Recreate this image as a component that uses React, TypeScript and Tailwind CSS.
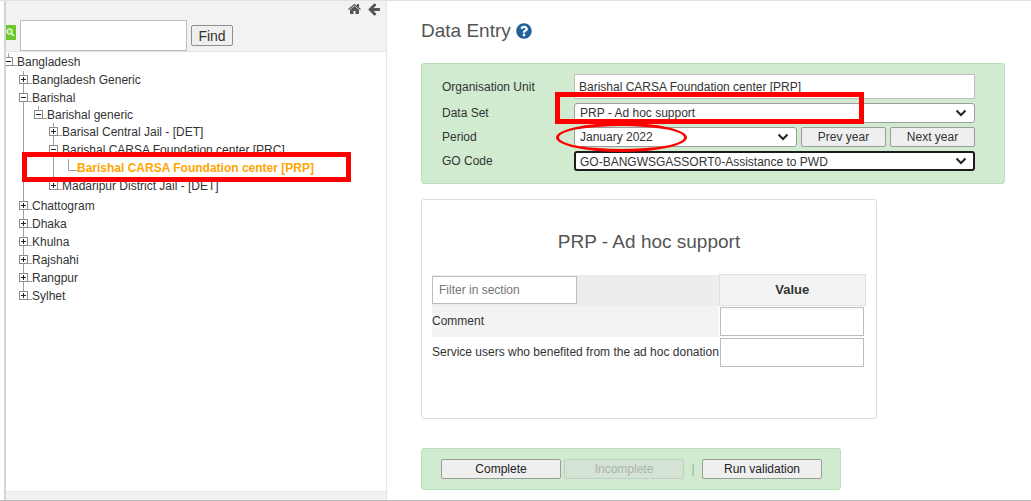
import type { ReactNode } from "react";
import { FaQuestionCircle } from "react-icons/fa";

type NodeIcon = "plus" | "minus" | "leaf";

interface UnitNode {
  name: string;
  icon: NodeIcon;
  selected?: boolean;
  children?: UnitNode[];
}

const root: UnitNode = {
  name: "Bangladesh",
  icon: "minus",
  children: [
    { name: "Bangladesh Generic", icon: "plus" },
    {
      name: "Barishal",
      icon: "minus",
      children: [
        {
          name: "Barishal generic",
          icon: "minus",
          children: [
            { name: "Barisal Central Jail - [DET]", icon: "plus" },
            {
              name: "Barishal CARSA Foundation center [PRC]",
              icon: "minus",
              children: [
                {
                  name: "Barishal CARSA Foundation center [PRP]",
                  icon: "leaf",
                  selected: true,
                },
              ],
            },
            { name: "Madaripur District Jail - [DET]", icon: "plus" },
          ],
        },
      ],
    },
    { name: "Chattogram", icon: "plus" },
    { name: "Dhaka", icon: "plus" },
    { name: "Khulna", icon: "plus" },
    { name: "Rajshahi", icon: "plus" },
    { name: "Rangpur", icon: "plus" },
    { name: "Sylhet", icon: "plus" },
  ],
};

function Toggle({ icon, last }: { icon: NodeIcon; last: boolean }) {
  if (icon === "leaf") {
    return (
      <svg width="15" height="18" className="shrink-0" fill="none" stroke="#a0a0a0" aria-hidden="true">
        <path d="M6.5 0V11.5H15" />
      </svg>
    );
  }
  return (
    <svg width="15" height="18" className="shrink-0" fill="none" aria-hidden="true">
      <path d={last ? "M6.5 0V5" : "M6.5 0V18"} stroke="#a0a0a0" />
      <path d="M11 12.5H15" stroke="#a0a0a0" />
      <rect x="2.5" y="4.5" width="8" height="8" fill="#fff" stroke="#8a8a8a" />
      <path d="M4 8.5H9" stroke="#222" />
      {icon === "plus" && <path d="M6.5 6V11" stroke="#222" />}
    </svg>
  );
}

function TreeItem({ node, last, depth }: { node: UnitNode; last: boolean; depth: number }) {
  return (
    <li>
      <div className="relative flex h-[18px] items-center">
        <Toggle icon={node.icon} last={last} />
        <a
          href="#"
          className={node.selected ? "font-bold whitespace-nowrap text-[#ffa500]" : "whitespace-nowrap"}
        >
          {node.name}
        </a>
        {node.selected && (
          <span className="pointer-events-none absolute -top-[7px] -left-[40px] z-10 h-[30px] w-[329px] border-[5px] border-[#fe0000]" />
        )}
      </div>
      {node.children && (
        <ul
          className={
            depth === 0
              ? "pl-[15px]"
              : last
                ? "-mt-px pb-px pl-[15px]"
                : depth === 1
                  ? "-mt-px ml-[6px] border-l border-[#a0a0a0] pb-px pl-[8px]"
                  : "ml-[6px] border-l border-[#a0a0a0] pl-[8px]"
          }
        >
          {node.children.map((child, i) => (
            <TreeItem
              key={child.name}
              node={child}
              last={i === node.children!.length - 1}
              depth={depth + 1}
            />
          ))}
        </ul>
      )}
    </li>
  );
}

function HomeIcon() {
  return (
    <svg width="14" height="14" viewBox="0 0 1792 1792" fill="currentColor" aria-hidden="true">
      <path d="M1408 992v480q0 26-19 45t-45 19h-384v-384h-256v384h-384q-26 0-45-19t-19-45v-480q0-1 .5-3t.5-3l575-474 575 474q1 2 1 6zm223-69l-62 74q-8 9-21 11h-3q-13 0-21-7l-692-577-692 577q-12 8-24 7-13-2-21-11l-62-74q-8-10-7-23.5t11-21.5l719-599q32-26 76-26t76 26l244 204v-195q0-14 9-23t23-9h192q14 0 23 9t9 23v408l219 182q10 8 11 21.5t-7 23.5z" />
    </svg>
  );
}

function BackIcon() {
  return (
    <svg width="14" height="14" viewBox="0 0 1792 1792" fill="currentColor" aria-hidden="true">
      <path d="M1664 896v128q0 53-32.5 90.5t-84.5 37.5h-704l293 294q38 36 38 90t-38 90l-75 76q-37 37-90 37-52 0-91-37l-651-652q-37-37-37-90 0-52 37-91l651-650q38-38 91-38 52 0 90 38l75 74q38 38 38 91t-38 91l-293 293h704q52 0 84.5 37.5t32.5 90.5z" />
    </svg>
  );
}

function SearchBadge() {
  return (
    <svg width="10" height="15" aria-hidden="true">
      <path d="M0 0H9Q10 0 10 1V14Q10 15 9 15H0Z" fill="#6cc62c" />
      <circle cx="3.5" cy="6.5" r="2.6" fill="#8bd655" stroke="#e9f9dc" strokeWidth="1.3" />
      <path d="M5.3 8.5L8 11" stroke="#e9f9dc" strokeWidth="1.5" />
    </svg>
  );
}

function Select({
  id,
  value,
  className,
  children,
}: {
  id: string;
  value: string;
  className: string;
  children?: ReactNode;
}) {
  return (
    <div className="relative min-w-0 flex-1">
      <select
        id={id}
        defaultValue={value}
        className={`block h-[20px] w-full appearance-none rounded-[3px] bg-white pr-6 outline-none ${className}`}
      >
        <option>{value}</option>
      </select>
      <svg
        width="12"
        height="8"
        className="pointer-events-none absolute top-[6px] right-[8px]"
        fill="none"
        stroke="#222"
        strokeWidth="2"
        aria-hidden="true"
      >
        <path d="M1.5 1.5L6 6L10.5 1.5" />
      </svg>
      {children}
    </div>
  );
}

const plainSelect = "border border-[#9c9c9c] pl-[5px]";
const focusedSelect = "border-2 border-[#1c1c1c] pl-[4px]";
const button = "h-[20px] rounded-[2px] border border-[#9c9c9c] bg-[#efefef] text-center";
const valueInput = "block h-[29px] w-full border border-[#bdbdbd] bg-white px-1 outline-none";

export default function App() {
  return (
    <div className="flex min-h-screen border-t border-b border-t-[#dde3ec] border-b-[#bdbdbd] bg-white font-['Liberation_Sans',Arial,sans-serif] text-[12px] leading-[18px] text-[#333]">
      <aside className="ml-[4px] flex w-[383px] shrink-0 flex-col border-r border-l-2 border-r-[#e6e6e6] border-l-[#d4d4d4]">
        <header className="border-b border-[#e3e3e3] bg-[#f2f2f2]">
          <div className="flex h-[19px] items-start justify-end gap-[5px] pt-px pr-[5px] text-[#555]">
            <a href="#" aria-label="Home">
              <HomeIcon />
            </a>
            <a href="#" aria-label="Back">
              <BackIcon />
            </a>
          </div>
          <form className="flex h-[31px] items-center gap-[4px]">
            <div className="mb-[6px]">
              <SearchBadge />
            </div>
            <input
              aria-label="Find organisation unit"
              className="h-[31px] w-[167px] border border-[#bdbdbd] bg-white px-1 outline-none"
            />
            <button
              type="button"
              className="h-[21px] w-[42px] rounded-[2px] border border-[#8f8f8f] bg-[#efefef] text-[14px]"
            >
              Find
            </button>
          </form>
        </header>
        <nav className="flex-1 overflow-hidden pt-px" aria-label="Organisation units">
          <ul className="-ml-[4px]">
            <TreeItem node={root} last depth={0} />
          </ul>
        </nav>
        <div className="h-[9px] border-t border-[#e8e8e8] bg-[#f1f1f1]" />
      </aside>

      <main className="min-w-0 flex-1 pr-[26px] pl-[34px]">
        <h1 className="flex h-[62px] items-center gap-[5px] pb-[2px] text-[19px] text-[#555]">
          Data Entry
          <a href="#" aria-label="Help" className="text-[#20639b]">
            <FaQuestionCircle size={16} />
          </a>
        </h1>

        <form className="grid grid-cols-[132px_minmax(0,1fr)] items-center gap-y-[4px] rounded-[3px] border border-[#b9dfb9] bg-[#d0ebd0] pt-[10px] pr-[29px] pb-[12px] pl-[20px]">
          <label htmlFor="unit">Organisation Unit</label>
          <input
            id="unit"
            readOnly
            value="Barishal CARSA Foundation center [PRP]"
            className="h-[25px] w-full border border-[#bdbdbd] bg-white px-[4px] outline-none"
          />

          <label htmlFor="dataset">Data Set</label>
          <Select id="dataset" value="PRP - Ad hoc support" className={plainSelect}>
            <span className="pointer-events-none absolute -top-[11px] -left-[19px] z-10 h-[32px] w-[309px] border-[5px] border-[#fe0000]" />
          </Select>

          <label htmlFor="period">Period</label>
          <div className="flex gap-[4px]">
            <Select id="period" value="January 2022" className={plainSelect}>
              <span className="pointer-events-none absolute -top-[4px] -left-[18px] z-10 h-[29px] w-[131px] rounded-[50%] border-[3px] border-[#fe0000]" />
            </Select>
            <button type="button" className={`${button} w-[85px]`}>
              Prev year
            </button>
            <button type="button" className={`${button} w-[85px]`}>
              Next year
            </button>
          </div>

          <label htmlFor="gocode">GO Code</label>
          <Select id="gocode" value="GO-BANGWSGASSORT0-Assistance to PWD" className={focusedSelect} />
        </form>

        <section className="mt-[15px] h-[220px] w-[456px] rounded-[3px] border border-[#dcdcdc] px-[10px]">
          <h2 className="pt-[33px] pb-[23px] text-center text-[19px] text-[#555]">PRP - Ad hoc support</h2>
          <table className="w-full border-collapse">
            <thead>
              <tr className="h-[31px]">
                <th className="w-[287px] bg-[#ededed] p-0 text-left font-normal">
                  <input
                    aria-label="Filter in section"
                    placeholder="Filter in section"
                    className="block h-[28px] w-[145px] border border-[#bdbdbd] bg-white px-[6px] outline-none placeholder:text-[#757575]"
                  />
                </th>
                <th className="border border-[#e0e0e0] bg-[#f3f3f3] p-0 text-[13px] font-bold">Value</th>
              </tr>
            </thead>
            <tbody>
              <tr className="h-[31px]">
                <td className="bg-[#f3f3f3] p-0 whitespace-nowrap">
                  <label htmlFor="comment">Comment</label>
                </td>
                <td className="pt-px pr-[2px] pb-0 pl-[1px]">
                  <input id="comment" className={valueInput} />
                </td>
              </tr>
              <tr className="h-[31px]">
                <td className="p-0 whitespace-nowrap">
                  <label htmlFor="users">Service users who benefited from the ad hoc donation</label>
                </td>
                <td className="pt-px pr-[2px] pb-0 pl-[1px]">
                  <input id="users" className={valueInput} />
                </td>
              </tr>
            </tbody>
          </table>
        </section>

        <div className="mt-[29px] flex h-[42px] w-[420px] items-center rounded-[3px] border border-[#b9dfb9] bg-[#d0ebd0] pl-[19px]">
          <button type="button" className={`${button} w-[120px] text-[#222]`}>
            Complete
          </button>
          <button
            type="button"
            disabled
            className="ml-[3px] h-[20px] w-[120px] rounded-[2px] border border-[#c0d0c0] bg-[#d5e3d5] text-[#a9b5a9]"
          >
            Incomplete
          </button>
          <span className="w-[18px] text-center text-[#9aaa9a]">|</span>
          <button type="button" className={`${button} w-[120px] text-[#222]`}>
            Run validation
          </button>
        </div>
      </main>
    </div>
  );
}
